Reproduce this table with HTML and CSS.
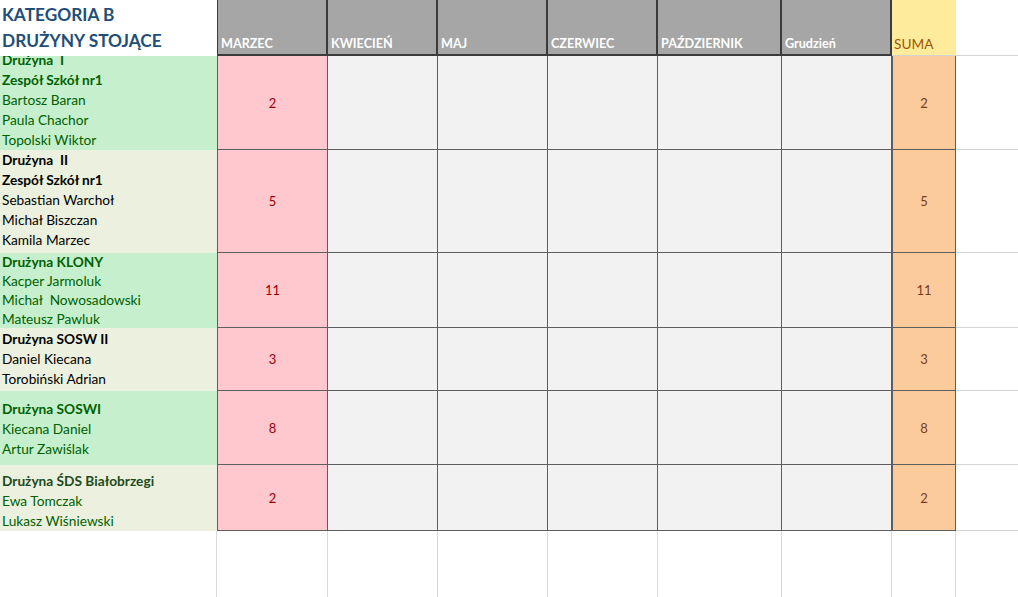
FILE: index.html
```html
<!DOCTYPE html>
<html lang="pl">
<head>
<meta charset="utf-8">
<title>Kategoria B</title>
<link rel="stylesheet" href="styles.css">
</head>
<body>
<div class="sheet">
  <div class="title-cell">
    <div class="title-line">KATEGORIA B</div>
    <div class="title-line">DRUŻYNY STOJĄCE</div>
  </div>
  <div class="hcell hcell-first">MARZEC</div>
  <div class="hcell">KWIECIEŃ</div>
  <div class="hcell">MAJ</div>
  <div class="hcell">CZERWIEC</div>
  <div class="hcell">PAŹDZIERNIK</div>
  <div class="hcell">Grudzień</div>
  <div class="hsum">SUMA</div>
  <div class="blank blank-h"></div>

  <div class="team team-green pb0">
    <div class="b">Drużyna&nbsp; I</div>
    <div class="b">Zespół Szkół nr1</div>
    <div>Bartosz Baran</div>
    <div>Paula Chachor</div>
    <div>Topolski Wiktor</div>
  </div>
  <div class="pink">2</div>
  <div class="gray"></div><div class="gray"></div><div class="gray"></div><div class="gray"></div><div class="gray"></div>
  <div class="sum">2</div>
  <div class="blank blank-h"></div>

  <div class="team team-beige pb3">
    <div class="b">Drużyna&nbsp; II</div>
    <div class="b">Zespół Szkół nr1</div>
    <div>Sebastian Warchoł</div>
    <div>Michał Biszczan</div>
    <div>Kamila Marzec</div>
  </div>
  <div class="pink">5</div>
  <div class="gray"></div><div class="gray"></div><div class="gray"></div><div class="gray"></div><div class="gray"></div>
  <div class="sum">5</div>
  <div class="blank blank-h"></div>

  <div class="team team-green team-tight pb0">
    <div class="b">Drużyna KLONY</div>
    <div>Kacper Jarmoluk</div>
    <div>Michał&nbsp; Nowosadowski</div>
    <div>Mateusz Pawluk</div>
  </div>
  <div class="pink">11</div>
  <div class="gray"></div><div class="gray"></div><div class="gray"></div><div class="gray"></div><div class="gray"></div>
  <div class="sum">11</div>
  <div class="blank blank-h"></div>

  <div class="team team-beige pb2">
    <div class="b">Drużyna SOSW II</div>
    <div>Daniel Kiecana</div>
    <div>Torobiński Adrian</div>
  </div>
  <div class="pink">3</div>
  <div class="gray"></div><div class="gray"></div><div class="gray"></div><div class="gray"></div><div class="gray"></div>
  <div class="sum">3</div>
  <div class="blank blank-h"></div>

  <div class="team team-green pb6">
    <div class="b">Drużyna SOSWI</div>
    <div>Kiecana Daniel</div>
    <div>Artur Zawiślak</div>
  </div>
  <div class="pink">8</div>
  <div class="gray"></div><div class="gray"></div><div class="gray"></div><div class="gray"></div><div class="gray"></div>
  <div class="sum">8</div>
  <div class="blank blank-h"></div>

  <div class="team team-beige team-mixed pb0">
    <div class="b">Drużyna ŚDS Białobrzegi</div>
    <div>Ewa Tomczak</div>
    <div>Lukasz Wiśniewski</div>
  </div>
  <div class="pink">2</div>
  <div class="gray"></div><div class="gray"></div><div class="gray"></div><div class="gray"></div><div class="gray"></div>
  <div class="sum">2</div>
  <div class="blank blank-h"></div>

  <div class="blank blank-v"></div>
  <div class="blank blank-v"></div>
  <div class="blank blank-v"></div>
  <div class="blank blank-v"></div>
  <div class="blank blank-v"></div>
  <div class="blank blank-v"></div>
  <div class="blank blank-v"></div>
  <div class="blank blank-v"></div>
  <div class="blank"></div>
</div>
</body>
</html>
```

FILE: styles.css
```css
* { box-sizing: border-box; }

html, body {
  margin: 0;
  padding: 0;
  background: #ffffff;
}

body {
  font-family: Lato, "Liberation Sans", sans-serif;
  font-size: 13.7px;
  color: #000;
  width: 1018px;
  height: 597px;
  overflow: hidden;
}

.sheet {
  display: grid;
  grid-template-columns: 217px 111px 110px 110px 110px 124px 110px 64px 1fr;
  grid-template-rows: 56px 94px 103px 75px 63px 74px 66px 1fr;
  height: 597px;
}

.title-cell {
  padding: 2px 0 0 2px;
  color: #1f4e79;
  font-weight: 700;
  font-size: 17.3px;
  background: #fff;
}

.title-line {
  height: 26px;
  line-height: 26px;
}

.hcell {
  background: #a6a6a6;
  color: #ffffff;
  font-weight: 700;
  font-size: 12.6px;
  border-right: 2px solid #3b3b3b;
  border-bottom: 2px solid #3b3b3b;
  display: flex;
  align-items: flex-end;
  padding: 0 0 3px 3px;
  white-space: nowrap;
}

.hcell-first {
  border-left: 1px solid #3b3b3b;
}

.hsum {
  background: #ffeb9c;
  color: #9c5700;
  display: flex;
  align-items: flex-end;
  padding: 0 0 3px 2px;
  border-bottom: 1px solid #d4d4d4;
}

.blank {
  background: #fff;
}

.blank-h {
  border-bottom: 1px solid #d4d4d4;
}

.blank-v {
  border-right: 1px solid #d9d9d9;
}

.team {
  display: flex;
  flex-direction: column;
  justify-content: flex-end;
  overflow: hidden;
  padding-left: 2px;
  line-height: 20px;
  white-space: nowrap;
}

.team-tight {
  line-height: 19px;
}

.team .b {
  font-weight: 700;
}

.team-green {
  background: #c6efce;
  color: #006100;
}

.team-beige {
  background: #ebf1de;
  color: #000;
}

.team-mixed {
  color: #006100;
}

.team-mixed .b {
  color: #1d4a1d;
}

.pb0 { padding-bottom: 0; }
.pb2 { padding-bottom: 2px; }
.pb3 { padding-bottom: 3px; }
.pb6 { padding-bottom: 6px; }

.pink,
.gray,
.sum {
  border-right: 1px solid #5e5e5e;
  border-bottom: 1px solid #5e5e5e;
  display: flex;
  align-items: center;
  justify-content: center;
  font-size: 13px;
}

.pink {
  background: #ffc7ce;
  color: #9c0006;
  border-left: 1px solid #5e5e5e;
}

.gray {
  background: #f2f2f2;
}

.sum {
  background: #fccb9c;
  color: #7a3b1e;
  border-left: 1px solid #5e5e5e;
}
```
